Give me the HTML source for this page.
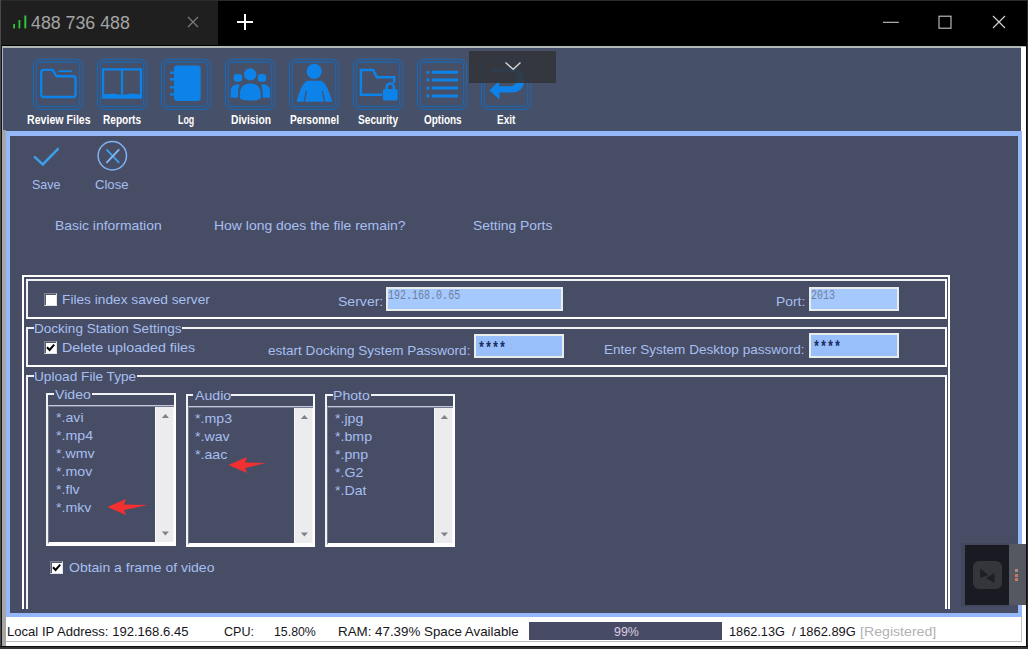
<!DOCTYPE html>
<html><head><meta charset="utf-8"><title>488 736 488</title>
<style>
*{box-sizing:border-box;margin:0;padding:0}
html,body{width:1028px;height:649px;overflow:hidden;background:#000;font-family:"Liberation Sans",sans-serif}
.a{position:absolute}
.t{position:absolute;white-space:nowrap;line-height:1;transform-origin:0 0}
.gb{position:absolute;border:2px solid #fff}
.g2{border-top-color:#f0f2f6;border-left-color:#f0f2f6}
.mask{position:absolute;background:#484d66;height:5px}
.inp{position:absolute;background:#a5c8fd;border:2px solid #e9ede9}
.cb{position:absolute;width:13px;height:13px;background:#fff;border:1px solid #7c8496;border-right-color:#dfe3ea;border-bottom-color:#dfe3ea;box-shadow:inset 1px 1px 0 #555a66}
.cb svg{position:absolute;left:-1px;top:-1px}
.lst{position:absolute;border-top:1px solid #c2c6d6;border-left:1px solid #6e748c;border-bottom:2px solid #fff;box-shadow:inset 0 1px 0 #747a92}
.sb{position:absolute;width:19px;background:#ececee;border-left:1px solid #fafafa;border-right:1px solid #f6f6f6}
.ic{position:absolute;top:58px;width:52px;height:52px}
.ic .f{fill:none;stroke:#1769ba;stroke-width:1.05}
.ic .s{fill:none;stroke:#0d82e8}
.ic .b{fill:#0d82e8}

</style></head><body>
<!-- title bar -->
<div class="a" style="left:0;top:0;width:1028px;height:46px;background:#000"></div>
<div class="a" style="left:0;top:0;width:1028px;height:1px;background:#2a2a2a"></div>
<div class="a" style="left:1px;top:1px;width:217px;height:44px;background:#1f1f1f"></div>
<div class="a" style="left:0;top:0;width:1px;height:649px;background:#4a4a4a"></div>
<div class="a" style="left:1px;top:45px;width:1px;height:604px;background:#151515"></div>
<svg class="a" style="left:12px;top:14px" width="16" height="16"><rect x="1.200" y="10" width="1.800" height="4.400" fill="#2fc23a"/><rect x="6.500" y="6" width="1.800" height="8.400" fill="#2fc23a"/><rect x="12.300" y="1.500" width="2" height="12.900" fill="#2fc23a"/></svg>
<svg class="a" style="left:187px;top:16px" width="12" height="12"><path d="M1 1L11 11M11 1L1 11" stroke="#7a7a7a" stroke-width="1.300"/></svg>
<svg class="a" style="left:236px;top:13px" width="18" height="18"><path d="M9 1V17M1 9H17" stroke="#fff" stroke-width="2"/></svg>
<svg class="a" style="left:880px;top:12px" width="130" height="22"><path d="M3 10.300H18.800" stroke="#c6c6c6" stroke-width="1.100"/><rect x="59" y="4.200" width="12" height="12" fill="none" stroke="#c6c6c6" stroke-width="1.100"/><path d="M113 4L125 16M125 4L113 16" stroke="#d0d0d0" stroke-width="1.200"/></svg>

<!-- app window -->
<div class="a" style="left:2px;top:46px;width:1024px;height:600px;background:#484d66"></div>
<div class="a" style="left:2px;top:46px;width:1024px;height:2px;background:#b2b8b4"></div>
<div class="a" style="left:2px;top:46px;width:1px;height:86px;background:#a8b0ca"></div>
<div class="a" style="left:1021px;top:47px;width:5px;height:599px;background:#fff"></div>
<div class="a" style="left:1026px;top:44px;width:1px;height:605px;background:#0c0c0c"></div>
<div class="a" style="left:1027px;top:0;width:1px;height:649px;background:#2c2c2c"></div>
<!-- lower frame -->
<div class="a" style="left:3px;top:48px;width:1018px;height:83px;background:#465068"></div>
<div class="a" style="left:2px;top:130px;width:4px;height:516px;background:#a6a6a6"></div>
<div class="a" style="left:6px;top:131px;width:1016px;height:486px;border:4px solid #93b7f8;border-top-width:5px"></div>
<!-- status bar -->
<div class="a" style="left:6px;top:617px;width:1020px;height:29px;background:#fff"></div>
<div class="a" style="left:6px;top:641px;width:1016px;height:1px;background:#bcbcbc"></div>
<div class="a" style="left:1021px;top:617px;width:1px;height:25px;background:#c4c4c4"></div>
<div class="a" style="left:2px;top:642px;width:1024px;height:4px;background:#fff"></div>
<div class="a" style="left:2px;top:642px;width:4px;height:4px;background:#a6a6a6"></div>
<div class="a" style="left:0;top:646px;width:1028px;height:1px;background:#0c0c0c"></div>
<div class="a" style="left:0;top:647px;width:1028px;height:2px;background:#333"></div>
<div class="a" style="left:529px;top:622px;width:193px;height:18px;background:#474c64"></div>

<!-- toolbar icons -->
<svg class="ic" style="left:32px" viewBox="0 0 52 52"><path class="f" d="M5.800,1.200H46.200L50.600,5.600V46.800L46.200,51.200H5.800L1.400,46.800V5.600ZM7.300,4.100H44.700L47.700,7.100V45.300L44.700,48.300H7.300L4.300,45.300V7.100Z"/><path class="s" stroke-width="2.400" d="M9.200,14.400Q9.200,11.900 11.700,11.900H20.500L24.500,18.200H41Q43.500,18.200 43.500,20.700V36.500Q43.500,39 41,39H11.700Q9.200,39 9.200,36.500Z"/><path class="s" stroke-width="1.800" d="M26.400,13.200H40.200"/></svg>
<svg class="ic" style="left:96px" viewBox="0 0 52 52"><path class="f" d="M5.800,1.200H46.200L50.600,5.600V46.800L46.200,51.200H5.800L1.400,46.800V5.600ZM7.300,4.100H44.700L47.700,7.100V45.300L44.700,48.300H7.300L4.300,45.300V7.100Z"/><path class="s" stroke-width="2.200" d="M7.100,38V11.400H44.900V38M26,11.400V38"/><path class="b" d="M6,36.500L17,35.500L26,37L35,35.500L46,36.500V40.700H6Z"/></svg>
<svg class="ic" style="left:160px" viewBox="0 0 52 52"><path class="f" d="M5.800,1.200H46.200L50.600,5.600V46.800L46.200,51.200H5.800L1.400,46.800V5.600ZM7.300,4.100H44.700L47.700,7.100V45.300L44.700,48.300H7.300L4.300,45.300V7.100Z"/><rect class="b" x="13.900" y="7.600" width="26.800" height="35.300" rx="2.800"/><path class="b" d="M9.900,13.400h5v2.300h-5zM9.900,20.100h5v2.300h-5zM9.900,28.200h5v2.300h-5zM9.900,35.300h5v2.300h-5z"/></svg>
<svg class="ic" style="left:224px" viewBox="0 0 52 52"><path class="f" d="M5.800,1.200H46.200L50.600,5.600V46.800L46.200,51.200H5.800L1.400,46.800V5.600ZM7.300,4.100H44.700L47.700,7.100V45.300L44.700,48.300H7.300L4.300,45.300V7.100Z"/><circle class="b" cx="26.200" cy="16.400" r="6.200"/><path class="b" d="M15.700,39C15.700,29 19,25.600 26.300,25.600C33.500,25.600 37,29 37,39Q37,42.600 26.300,42.600Q15.700,42.600 15.700,39Z"/><rect class="b" x="9.700" y="16" width="8.400" height="7.800" rx="3"/><rect class="b" x="33.800" y="16" width="8.400" height="7.800" rx="3"/><path class="b" d="M6.700,39.800V32Q7.500,27 13.500,26.300L15.600,26.600Q13.800,31 14,39.800ZM46,39.800V32Q45.200,27 39.200,26.300L37.100,26.600Q38.900,31 38.700,39.800Z"/></svg>
<svg class="ic" style="left:288px" viewBox="0 0 52 52"><path class="f" d="M5.800,1.200H46.200L50.600,5.600V46.800L46.200,51.200H5.800L1.400,46.800V5.600ZM7.300,4.100H44.700L47.700,7.100V45.300L44.700,48.300H7.300L4.300,45.300V7.100Z"/><circle class="b" cx="26.200" cy="13.400" r="7.600"/><path class="b" d="M8.500,43.800C11,34 14,26 19,22.800H33.500C38.500,26 41.500,34 44.300,43.800Z"/><path d="M16.300,43.800L18.300,33M36.500,43.800L34.500,33" stroke="#484d66" stroke-width="1.200"/></svg>
<svg class="ic" style="left:352px" viewBox="0 0 52 52"><path class="f" d="M5.800,1.200H46.200L50.600,5.600V46.800L46.200,51.200H5.800L1.400,46.800V5.600ZM7.300,4.100H44.700L47.700,7.100V45.300L44.700,48.300H7.300L4.300,45.300V7.100Z"/><path class="s" stroke-width="2.500" d="M30,36.800H8.900V12H21L25,19.300H42.100V25"/><rect class="b" x="30.800" y="31" width="14.900" height="11.400" rx="2"/><path class="s" stroke-width="2.400" d="M34.700,32.500V29A3.550,3.550 0 0 1 41.800,29V32.500"/></svg>
<svg class="ic" style="left:416px" viewBox="0 0 52 52"><path class="f" d="M5.800,1.200H46.200L50.600,5.600V46.800L46.200,51.200H5.800L1.400,46.800V5.600ZM7.300,4.100H44.700L47.700,7.100V45.300L44.700,48.300H7.300L4.300,45.300V7.100Z"/><path class="b" d="M10.500,12.9h2.800v2.800h-2.800zM15.800,12.8h26.200v3h-26.200zM10.500,20.5h2.800v2.800h-2.800zM15.800,20.4h26.200v3h-26.200zM10.500,28.6h2.800v2.800h-2.800zM15.800,28.5h26.200v3h-26.200zM10.500,36.6h2.800v2.800h-2.800zM15.800,36.5h26.200v3h-26.200z"/></svg>
<svg class="ic" style="left:480px" viewBox="0 0 52 52"><path class="f" d="M5.800,1.200H46.200L50.600,5.600V46.800L46.200,51.200H5.800L1.400,46.800V5.600ZM7.300,4.100H44.700L47.700,7.100V45.300L44.700,48.300H7.300L4.300,45.300V7.100Z"/><path class="b" d="M12,10.300H34Q44.300,10.300 44.300,21Q44.300,34.500 31,34.500H19.500V41.600L9.400,32.600L19.200,22.800V28.300H30Q36.700,28.300 36.700,21Q36.700,14.300 32,14.300H12Z"/></svg>
<!-- dropdown overlay -->
<div class="a" style="left:469px;top:51px;width:87px;height:32px;background:rgba(50,52,58,.9)"></div>
<svg class="a" style="left:503px;top:60px" width="22" height="12"><path d="M2.500,2.500L10.200,9.200L17.500,2.500" fill="none" stroke="#cfd2d8" stroke-width="1.500"/></svg>

<!-- save / close -->
<svg class="a" style="left:30px;top:144px" width="32" height="26"><path d="M4,12.400L12.800,20.400L28.500,4.300" fill="none" stroke="#3a9fe8" stroke-width="2.600"/></svg>
<svg class="a" style="left:96px;top:140px" width="33" height="33"><circle cx="16.300" cy="15.800" r="14.200" fill="none" stroke="#7fb2f2" stroke-width="1.500"/><path d="M10.400,9.400L23.200,22.800" stroke="#3a9fe8" stroke-width="1.900"/><path d="M23.200,9.400L10.400,22.800" stroke="#86b6f6" stroke-width="1.900"/></svg>

<!-- group boxes -->
<div class="gb" style="left:22px;top:275px;width:928px;height:334px;border-bottom:none"></div>
<div class="gb g2" style="left:26px;top:279px;width:921px;height:40px"></div>
<div class="gb g2" style="left:26px;top:327px;width:921px;height:40px"></div>
<div class="gb g2" style="left:26px;top:375px;width:921px;height:234px;border-bottom:none"></div>
<div class="mask" style="left:34px;top:326px;width:148px"></div>
<div class="mask" style="left:34px;top:374px;width:103px"></div>

<!-- row 1 -->
<div class="cb" style="left:44px;top:293px"></div>
<div class="inp" style="left:386px;top:287px;width:177px;height:24px"></div>
<div class="inp" style="left:809px;top:287px;width:90px;height:24px"></div>
<!-- row 2 -->
<div class="cb" style="left:44px;top:341px"><svg width="13" height="13"><path d="M3,6.200L5.600,9L10.200,3.600" stroke="#000" stroke-width="2" fill="none"/></svg></div>
<div class="inp" style="left:474px;top:334px;width:90px;height:24px;background:#98bffa"></div>
<div class="inp" style="left:809px;top:333px;width:90px;height:25px;background:#98bffa"></div>

<!-- lists -->
<div class="gb g2" style="left:46px;top:393px;width:130px;height:153px"></div>
<div class="mask" style="left:54px;top:392px;width:38px"></div>
<div class="lst" style="left:48px;top:405px;width:126px;height:139px"></div>
<div class="sb" style="left:155px;top:407px;height:135px"><svg width="19" height="135"><path d="M5.800,11L9.400,7L13,11ZM5.800,124.5L9.400,128.5L13,124.5Z" fill="#808488"/></svg></div>
<div class="gb g2" style="left:186px;top:394px;width:129px;height:153px"></div>
<div class="mask" style="left:193px;top:393px;width:38px"></div>
<div class="lst" style="left:188px;top:406px;width:125px;height:139px"></div>
<div class="sb" style="left:294px;top:408px;height:135px"><svg width="19" height="135"><path d="M5.800,11L9.400,7L13,11ZM5.800,124.5L9.400,128.5L13,124.5Z" fill="#808488"/></svg></div>
<div class="gb g2" style="left:325px;top:394px;width:130px;height:153px"></div>
<div class="mask" style="left:333px;top:393px;width:38px"></div>
<div class="lst" style="left:327px;top:406px;width:126px;height:139px"></div>
<div class="sb" style="left:434px;top:408px;height:135px"><svg width="19" height="135"><path d="M5.800,11L9.400,7L13,11ZM5.800,124.5L9.400,128.5L13,124.5Z" fill="#808488"/></svg></div>

<svg class="a" style="left:105px;top:497px" width="46" height="20"><path d="M2.500,10L21,2L19,7.500L43,8L19,13L21,18Z" fill="#f23030"/></svg>
<svg class="a" style="left:226px;top:455px" width="46" height="20"><path d="M2.500,10L21,2L19,7.500L40,8L19,13L21,18Z" fill="#f23030"/></svg>

<div class="cb" style="left:50px;top:561px"><svg width="13" height="13"><path d="M3,6.200L5.600,9L10.200,3.600" stroke="#000" stroke-width="2" fill="none"/></svg></div>

<!-- floating widget -->
<div class="a" style="left:961px;top:543px;width:48px;height:64px;background:rgba(30,32,44,.12)"></div>
<div class="a" style="left:965px;top:545px;width:44px;height:60px;background:#1a1b22"></div>
<div class="a" style="left:1009px;top:544px;width:17px;height:61px;background:#565861"></div>
<div class="a" style="left:973px;top:561px;width:29px;height:28px;border-radius:6px;background:#35363c"></div>
<svg class="a" style="left:973px;top:561px" width="29" height="28"><path d="M7.300,7.500V17L15,14ZM21.500,12V22L13,17Z" fill="#1e1f25"/></svg>
<div class="a" style="left:1015px;top:569px;width:3px;height:3px;background:#a48a8a"></div>
<div class="a" style="left:1015px;top:573.500px;width:3px;height:3px;background:#c87a5a"></div>
<div class="a" style="left:1015px;top:578px;width:3px;height:3px;background:#c87a5a"></div>

<!-- text -->
<div class="t" style="left:31.0px;top:14.9px;font-size:17.6px;color:#a4a4a4;transform:scaleX(1.0104);">488 736 488</div>
<div class="t" style="left:26.8px;top:113.7px;font-size:12.2px;color:#ffffff;font-weight:bold;transform:scaleX(0.8695);">Review Files</div>
<div class="t" style="left:103.2px;top:113.7px;font-size:12.2px;color:#ffffff;font-weight:bold;transform:scaleX(0.8271);">Reports</div>
<div class="t" style="left:178.2px;top:113.7px;font-size:12.2px;color:#ffffff;font-weight:bold;transform:scaleX(0.7264);">Log</div>
<div class="t" style="left:230.5px;top:113.7px;font-size:12.2px;color:#ffffff;font-weight:bold;transform:scaleX(0.8437);">Division</div>
<div class="t" style="left:289.5px;top:113.7px;font-size:12.2px;color:#ffffff;font-weight:bold;transform:scaleX(0.8318);">Personnel</div>
<div class="t" style="left:357.5px;top:113.7px;font-size:12.2px;color:#ffffff;font-weight:bold;transform:scaleX(0.8345);">Security</div>
<div class="t" style="left:424.0px;top:113.7px;font-size:12.2px;color:#ffffff;font-weight:bold;transform:scaleX(0.8182);">Options</div>
<div class="t" style="left:496.9px;top:113.7px;font-size:12.2px;color:#ffffff;font-weight:bold;transform:scaleX(0.8205);">Exit</div>
<div class="t" style="left:32.0px;top:178.1px;font-size:13px;color:#a6bff0;transform:scaleX(0.9581);">Save</div>
<div class="t" style="left:95.1px;top:178.1px;font-size:13px;color:#a6bff0;transform:scaleX(1.0070);">Close</div>
<div class="t" style="left:55.1px;top:218.9px;font-size:13px;color:#a6bff0;transform:scaleX(1.0695);">Basic information</div>
<div class="t" style="left:213.9px;top:218.9px;font-size:13px;color:#a6bff0;transform:scaleX(1.0735);">How long does the file remain?</div>
<div class="t" style="left:472.8px;top:218.9px;font-size:13px;color:#a6bff0;transform:scaleX(1.0659);">Setting Ports</div>
<div class="t" style="left:61.5px;top:292.8px;font-size:13px;color:#a6bff0;transform:scaleX(1.0547);">Files index saved server</div>
<div class="t" style="left:337.5px;top:294.8px;font-size:13px;color:#a6bff0;transform:scaleX(1.0804);">Server:</div>
<div class="t" style="left:775.7px;top:294.8px;font-size:13px;color:#a6bff0;transform:scaleX(1.0654);">Port:</div>
<div class="t" style="left:34.0px;top:321.6px;font-size:13px;color:#a6bff0;transform:scaleX(1.0414);">Docking Station Settings</div>
<div class="t" style="left:61.5px;top:341.1px;font-size:13px;color:#a6bff0;transform:scaleX(1.0967);">Delete uploaded files</div>
<div class="t" style="left:267.6px;top:344.3px;font-size:13px;color:#a6bff0;transform:scaleX(1.0415);">estart Docking System Password:</div>
<div class="t" style="left:604.1px;top:343.2px;font-size:13px;color:#a6bff0;transform:scaleX(1.0432);">Enter System Desktop password:</div>
<div class="t" style="left:33.9px;top:370.2px;font-size:13px;color:#a6bff0;transform:scaleX(1.0501);">Upload File Type</div>
<div class="t" style="left:55.1px;top:388.0px;font-size:13px;color:#a6bff0;transform:scaleX(1.0853);">Video</div>
<div class="t" style="left:194.7px;top:389.0px;font-size:13px;color:#a6bff0;transform:scaleX(1.0882);">Audio</div>
<div class="t" style="left:333.3px;top:389.0px;font-size:13px;color:#a6bff0;transform:scaleX(1.0853);">Photo</div>
<div class="t" style="left:68.5px;top:560.5px;font-size:13px;color:#a6bff0;transform:scaleX(1.0762);">Obtain a frame of video</div>
<div class="t" style="left:387.9px;top:289.5px;font-size:12.6px;color:#6c7e9e;font-family:'Liberation Mono',monospace;transform:scaleX(0.7956);">192.168.0.65</div>
<div class="t" style="left:811.2px;top:289.5px;font-size:12.6px;color:#6c7e9e;font-family:'Liberation Mono',monospace;transform:scaleX(0.7943);">2013</div>
<div class="t" style="left:477.5px;top:340.9px;font-size:16px;color:#1a2a5c;font-weight:bold;font-family:'Liberation Mono',monospace;transform:scaleX(0.7303);">****</div>
<div class="t" style="left:812.5px;top:339.9px;font-size:16px;color:#1a2a5c;font-weight:bold;font-family:'Liberation Mono',monospace;transform:scaleX(0.7303);">****</div>
<div class="t" style="left:55.9px;top:410.6px;font-size:13.5px;color:#a6bff0;transform:scaleX(1.0500);">*.avi</div>
<div class="t" style="left:55.9px;top:428.6px;font-size:13.5px;color:#a6bff0;transform:scaleX(1.0500);">*.mp4</div>
<div class="t" style="left:55.9px;top:446.6px;font-size:13.5px;color:#a6bff0;transform:scaleX(1.0500);">*.wmv</div>
<div class="t" style="left:55.9px;top:464.6px;font-size:13.5px;color:#a6bff0;transform:scaleX(1.0500);">*.mov</div>
<div class="t" style="left:55.9px;top:482.6px;font-size:13.5px;color:#a6bff0;transform:scaleX(1.0500);">*.flv</div>
<div class="t" style="left:55.9px;top:500.6px;font-size:13.5px;color:#a6bff0;transform:scaleX(1.0500);">*.mkv</div>
<div class="t" style="left:194.9px;top:411.6px;font-size:13.5px;color:#a6bff0;transform:scaleX(1.0500);">*.mp3</div>
<div class="t" style="left:194.9px;top:429.6px;font-size:13.5px;color:#a6bff0;transform:scaleX(1.0500);">*.wav</div>
<div class="t" style="left:194.9px;top:447.6px;font-size:13.5px;color:#a6bff0;transform:scaleX(1.0500);">*.aac</div>
<div class="t" style="left:334.9px;top:411.6px;font-size:13.5px;color:#a6bff0;transform:scaleX(1.0500);">*.jpg</div>
<div class="t" style="left:334.9px;top:429.6px;font-size:13.5px;color:#a6bff0;transform:scaleX(1.0500);">*.bmp</div>
<div class="t" style="left:334.9px;top:447.6px;font-size:13.5px;color:#a6bff0;transform:scaleX(1.0500);">*.pnp</div>
<div class="t" style="left:334.9px;top:465.6px;font-size:13.5px;color:#a6bff0;transform:scaleX(1.0500);">*.G2</div>
<div class="t" style="left:334.9px;top:483.6px;font-size:13.5px;color:#a6bff0;transform:scaleX(1.0500);">*.Dat</div>
<div class="t" style="left:7.0px;top:624.8px;font-size:13px;color:#16161a;transform:scaleX(1.0056);">Local IP Address: 192.168.6.45</div>
<div class="t" style="left:224.0px;top:624.8px;font-size:13px;color:#16161a;transform:scaleX(0.9655);">CPU:</div>
<div class="t" style="left:274.0px;top:624.8px;font-size:13px;color:#16161a;transform:scaleX(0.9481);">15.80%</div>
<div class="t" style="left:338.0px;top:624.8px;font-size:13px;color:#16161a;transform:scaleX(1.0263);">RAM: 47.39% Space Available</div>
<div class="t" style="left:613.9px;top:624.8px;font-size:13px;color:#dccce4;transform:scaleX(0.9527);">99%</div>
<div class="t" style="left:729.4px;top:624.8px;font-size:13px;color:#16161a;transform:scaleX(0.9790);">1862.13G</div>
<div class="t" style="left:792.4px;top:624.8px;font-size:13px;color:#16161a;transform:scaleX(0.9909);">/ 1862.89G</div>
<div class="t" style="left:859.8px;top:624.8px;font-size:13px;color:#b2b2b2;transform:scaleX(1.0882);">[Registered]</div>
</body></html>
